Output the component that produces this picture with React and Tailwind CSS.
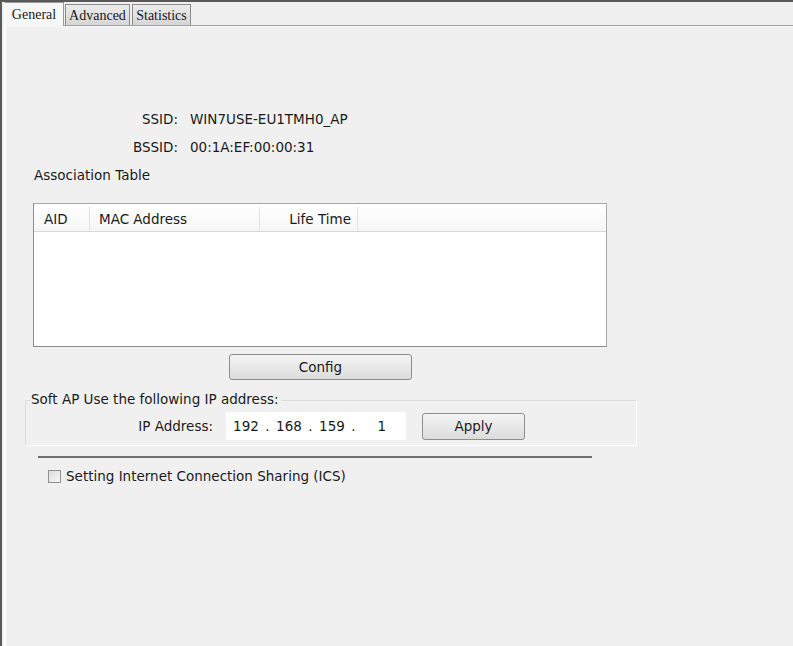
export default function App() {
  const ui = { fontFamily: '"DejaVu Sans", Verdana, sans-serif' };
  const tab = { fontFamily: '"Liberation Serif", "Times New Roman", serif' };
  const octets = ["192", "168", "159", "1"];

  return (
    <div
      className="relative h-[646px] w-[793px] overflow-hidden border-l-2 border-t-2 border-[#5a5a5a] bg-[#f0f0f0] text-[13.5px] text-[#1a1a1a]"
      style={ui}
    >
      {/* tabs */}
      <div className="flex h-[23px] items-end pl-[2px]" style={tab}>
        <div className="relative z-10 -mb-px flex h-[24px] w-[60px] items-center justify-center border border-b-0 border-[#9a9a9a] border-l-white bg-[#f7f7f7] text-[14px]">
          General
        </div>
        <div className="ml-px flex h-[21px] w-[65px] items-center justify-center border border-b-0 border-[#8a8a8a] bg-gradient-to-b from-[#ececec] to-[#d6d6d6] text-[14px]">
          Advanced
        </div>
        <div className="ml-[2px] flex h-[21px] w-[59px] items-center justify-center border border-b-0 border-[#8a8a8a] bg-gradient-to-b from-[#ececec] to-[#d6d6d6] text-[14px]">
          Statistics
        </div>
      </div>

      {/* panel */}
      <div className="ml-[2px] h-full border-l-2 border-t border-l-white border-t-[#a0a0a0]">
        <div className="border-t border-[#f8f8f8]">
          {/* SSID / BSSID */}
          <div className="mt-[84px] grid grid-cols-[172px_1fr] gap-x-[12px] gap-y-[12px] leading-[16px]">
            <div className="text-right">SSID:</div>
            <div>WIN7USE-EU1TMH0_AP</div>
            <div className="text-right">BSSID:</div>
            <div>00:1A:EF:00:00:31</div>
          </div>

          <div className="ml-[28px] mt-[12px] leading-[16px]">Association Table</div>

          {/* table */}
          <div className="ml-[27px] mt-[20px] h-[144px] w-[574px] border border-[#a8a8a8] border-b-[#8c8c8c] border-l-[#8c8c8c] bg-white">
            <div className="flex h-[28px] border-b border-[#d8d8d8] bg-gradient-to-b from-white to-[#f6f6f6] pt-[3px]">
              <div className="flex w-[56px] items-center border-r border-[#e2e2e2] pl-[10px]">AID</div>
              <div className="flex w-[170px] items-center border-r border-[#e2e2e2] pl-[9px]">MAC Address</div>
              <div className="flex w-[98px] items-center justify-end border-r border-[#e2e2e2] pr-[6px]">Life Time</div>
            </div>
          </div>

          {/* config */}
          <div className="ml-[223px] mt-[7px] flex h-[26px] w-[183px] items-center justify-center rounded-[3px] border border-[#8e8e8e] bg-gradient-to-b from-[#f4f4f4] to-[#dcdcdc]">
            Config
          </div>

          {/* soft ap group */}
          <div className="relative ml-[19px] mt-[20px] h-[46px] w-[612px] rounded-[3px] border border-[#dcdcdc] border-b-white border-r-white">
            <div className="absolute -top-[10px] left-[5px] bg-[#f0f0f0] pr-[2px] leading-[16px]">
              Soft AP Use the following IP address:
            </div>
            <div className="flex h-full items-center pt-[6px]">
              <div className="w-[187px] text-right">IP Address:</div>
              <div className="ml-[13px] flex h-[28px] w-[180px] items-center bg-white pl-[5px]">
                {octets.map((o, i) => (
                  <div key={i} className="flex">
                    <span className={i === 3 ? "w-[26px] text-right" : "w-[30px] text-center"}>{o}</span>
                    {i < 3 && <span className="w-[13px] text-center">.</span>}
                  </div>
                ))}
              </div>
              <div className="ml-[16px] flex h-[27px] w-[103px] items-center justify-center rounded-[3px] border border-[#8e8e8e] bg-gradient-to-b from-[#f4f4f4] to-[#dcdcdc]">
                Apply
              </div>
            </div>
          </div>

          {/* separator */}
          <div className="ml-[32px] mt-[10px] h-[2px] w-[554px] bg-[#6e6e6e]" />

          {/* ICS */}
          <div className="ml-[42px] mt-[8px] flex items-center gap-[5px]">
            <div className="h-[13px] w-[13px] border border-[#8f8f8f] bg-gradient-to-br from-[#dcdcdc] to-[#f8f8f8]" />
            <span>Setting Internet Connection Sharing (ICS)</span>
          </div>
        </div>
      </div>
    </div>
  );
}
